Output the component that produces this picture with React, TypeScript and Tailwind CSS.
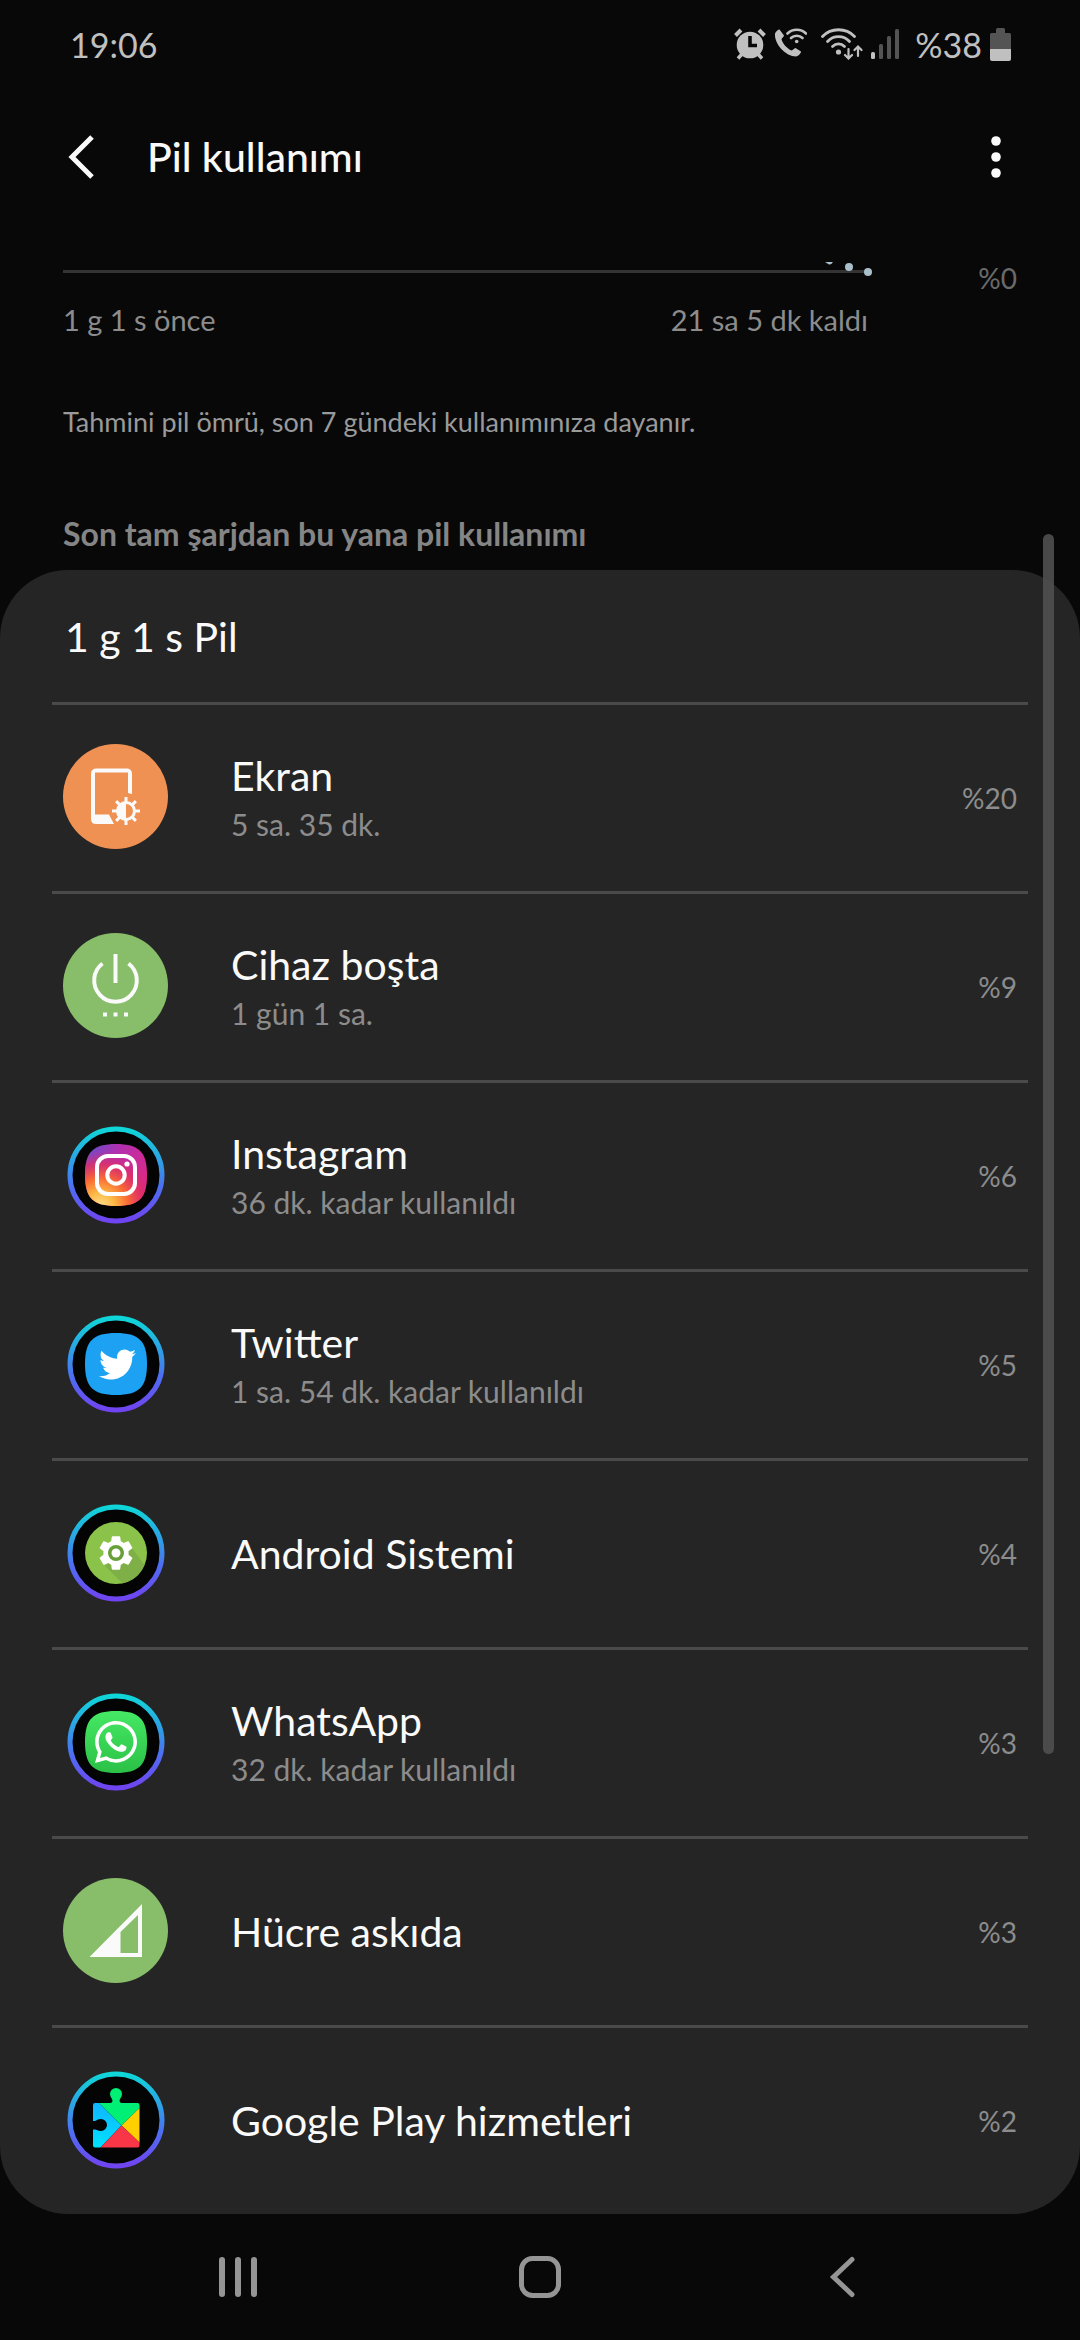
import React from "react";
import { FaTwitter, FaWhatsapp } from "react-icons/fa";
import { MdSettings } from "react-icons/md";

type UsageItem = {
  name: string;
  detail?: string;
  percent: number;
  icon: React.ReactNode;
};

const AlarmIcon = () => (
  <svg width="32" height="32" viewBox="0 0 32 32" fill="none" stroke="#c0c0c0">
    <path d="M1.5 7.5 7 2M30.500 7.500 25 2" strokeWidth="4" />
    <path d="M8 26 4 30.500M24 26l4 4.500" strokeWidth="3.500" />
    <circle cx="16" cy="17" r="13.300" fill="#c0c0c0" stroke="none" />
    <path d="M16 8v9.500h7" stroke="#080808" strokeWidth="3.600" />
  </svg>
);

const WifiCallIcon = () => (
  <svg width="33" height="32" viewBox="0 0 33 32" fill="none" stroke="#c0c0c0" strokeLinecap="round">
    <path
      d="M1 5.500C2 3.500 4 1.500 5.500 1.500L10 7.500C10 9 7.500 10 7.500 11.500C9 16 13 20.500 17.500 22.500C19 22.500 20 20 21.500 20L27 23.500C27 25.500 24.500 28 22 28.500C12 28.500 0 16 1 5.500Z"
      fill="#c0c0c0"
      stroke="none"
    />
    <path d="M13.500 5.500C18.500 .5 27 .5 32 5.500" strokeWidth="2.600" />
    <path d="M17 10C20 7 25.500 7 28.500 10" strokeWidth="2.600" />
    <circle cx="22.700" cy="13.500" r="1.800" fill="#c0c0c0" stroke="none" />
  </svg>
);

const WifiIcon = () => (
  <svg width="42" height="32" viewBox="0 0 42 32" fill="none" stroke="#c0c0c0" strokeLinecap="round">
    <path d="M1.500 8.500C10-.500 25-.500 33.500 8.500" strokeWidth="2.800" />
    <path d="M6.500 13.500C12.500 7 22.500 7 28.500 13.500" strokeWidth="2.800" />
    <path d="M11.500 18.500C15 15 20 15 23.500 18.500" strokeWidth="2.800" />
    <circle cx="17.500" cy="24" r="2.600" fill="#c0c0c0" stroke="none" />
    <path d="M27.500 21v9M24 27l3.500 3.500L31 27M37 28v-9M33.500 22l3.500-3.500L40.500 22" strokeWidth="2.200" />
  </svg>
);

const SignalIcon = () => (
  <svg width="28" height="32" viewBox="0 0 28 32" fill="#545454">
    <rect x="0" y="24" width="4" height="7" rx="1.500" fill="#c0c0c0" />
    <rect x="8" y="16" width="4" height="15" rx="1.500" />
    <rect x="16" y="8" width="4" height="23" rx="1.500" />
    <rect x="24" y="1" width="4" height="30" rx="1.500" />
  </svg>
);

const BatteryIcon = () => (
  <svg width="21" height="33" viewBox="0 0 21 33" fill="#545454">
    <path d="M6 1.500Q6 0 7.500 0H13.500Q15 0 15 1.500V5H19.500Q21 5 21 6.500V21H0V6.500Q0 5 1.500 5H6Z" />
    <path d="M0 21H21V31Q21 33 19 33H2Q0 33 0 31Z" fill="#c0c0c0" />
  </svg>
);

const ScreenIcon = () => (
  <svg width="105" height="105" viewBox="0 0 105 105">
    <circle cx="52.500" cy="52.500" r="52.500" fill="#f09154" />
    <path d="M68.500 50 65 49V28.500H32V70.500H46L51 80H33Q28 80 28 75V30Q28 24.500 33.500 24.500H63.500Q69 24.500 69 30V50Z" fill="#fafafa" />
    <g stroke="#fafafa" strokeWidth="3">
      <path d="M63 53v28M49 67h28M53.100 57.100l19.800 19.800M72.900 57.100 53.100 76.900" />
    </g>
    <circle cx="63" cy="67" r="8.500" fill="#f09154" stroke="#fafafa" strokeWidth="3" />
    <path d="M63 58a9 9 0 0 0 0 18Z" fill="#fafafa" />
  </svg>
);

const IdleIcon = () => (
  <svg width="105" height="105" viewBox="0 0 105 105">
    <circle cx="52.500" cy="52.500" r="52.500" fill="#88bd6a" />
    <g fill="none" stroke="#fafafa" strokeWidth="4">
      <path d="M52.500 21v29" />
      <path d="M39.500 30.500A21.300 21.300 0 1 0 65.500 30.500" />
    </g>
    <path d="M40 79.500h4v4h-4zM50.500 79.500h4v4h-4zM61 79.500h4v4h-4z" fill="#fafafa" />
  </svg>
);

const CellIcon = () => (
  <svg width="105" height="105" viewBox="0 0 105 105">
    <circle cx="52.500" cy="52.500" r="52.500" fill="#88bd6a" />
    <path d="M26.500 79 79 26V79ZM57.500 54V75H75V37Z" fill="#fafafa" fillRule="evenodd" />
  </svg>
);

// Black disc with the gradient ring that app icons sit in
const AppRing = ({ children }: { children: React.ReactNode }) => (
  <svg width="98" height="98" viewBox="0 0 98 98">
    <defs>
      <linearGradient id="ring" x1="0" y1="0" x2="0" y2="1">
        <stop offset="0" stopColor="#0fd6d8" />
        <stop offset=".4" stopColor="#3398e8" />
        <stop offset=".65" stopColor="#4f6cf2" />
        <stop offset="1" stopColor="#7044f0" />
      </linearGradient>
    </defs>
    <circle cx="49" cy="49" r="46" fill="#040404" stroke="url(#ring)" strokeWidth="5" />
    {children}
  </svg>
);

const squircle = "M49 18C72 18 80 26 80 49S72 80 49 80 18 72 18 49 26 18 49 18Z";

const InstagramIcon = () => (
  <AppRing>
    <defs>
      <linearGradient id="igBase" x1="0" y1="0" x2="1" y2=".5">
        <stop offset="0" stopColor="#5a55d0" />
        <stop offset=".45" stopColor="#b02fb0" />
        <stop offset="1" stopColor="#d9298a" />
      </linearGradient>
      <radialGradient id="igGlow" cx=".25" cy="1" r=".9">
        <stop offset="0" stopColor="#fee08a" />
        <stop offset=".25" stopColor="#fdb845" />
        <stop offset=".5" stopColor="#f96a35" />
        <stop offset=".75" stopColor="#e3305f" stopOpacity=".8" />
        <stop offset="1" stopColor="#d62a80" stopOpacity="0" />
      </radialGradient>
    </defs>
    <path d={squircle} fill="url(#igBase)" />
    <path d={squircle} fill="url(#igGlow)" />
    <g fill="none" stroke="#fff">
      <rect x="30" y="30" width="38" height="38" rx="11" strokeWidth="4" />
      <circle cx="49" cy="49" r="8.700" strokeWidth="4" />
    </g>
    <circle cx="60" cy="38" r="2.600" fill="#fff" />
  </AppRing>
);

const TwitterIcon = () => (
  <AppRing>
    <path d={squircle} fill="#1da1f2" />
    <FaTwitter x={32} y={31} size={37} color="#fff" />
  </AppRing>
);

const AndroidIcon = () => (
  <AppRing>
    <circle cx="49" cy="49" r="31" fill="#8bc34a" />
    <path d="M38 62 55.500 79.300A31 31 0 0 0 77.500 61L63.500 42Z" fill="#7fb048" />
    <MdSettings x={28} y={28} size={42} color="#fff" />
    <circle cx="49" cy="49" r="8" fill="#689f38" />
    <circle cx="49" cy="49" r="4.500" fill="#fff" />
  </AppRing>
);

const WhatsAppIcon = () => (
  <AppRing>
    <defs>
      <linearGradient id="wa" x1="0" y1="0" x2="0" y2="1">
        <stop offset="0" stopColor="#45e864" />
        <stop offset="1" stopColor="#2bc146" />
      </linearGradient>
    </defs>
    <path d={squircle} fill="url(#wa)" />
    <FaWhatsapp x={25} y={25} size={48} color="#fff" />
  </AppRing>
);

const PlayServicesIcon = () => (
  <AppRing>
    <defs>
      <clipPath id="puzzle">
        <path d="M28 32H43Q45.500 32 45.500 30C45.500 27.500 43 26 43 23A6 6 0 0 1 55 23C55 26 52.500 27.500 52.500 30Q52.500 32 55 32H70.500Q72.500 32 72.500 34V74.500Q72.500 76.500 70.500 76.500H28Q26 76.500 26 74.500V58.500H28C29.500 58.500 31 60 34 60A6 6 0 0 0 34 48C31 48 29.500 49.500 28 50H26V34Q26 32 28 32Z" />
      </clipPath>
      <linearGradient id="playBlue" x1="0" y1="0" x2="0" y2="1">
        <stop offset="0" stopColor="#10b4ff" />
        <stop offset="1" stopColor="#00e2ff" />
      </linearGradient>
    </defs>
    <g clipPath="url(#puzzle)">
      <path d="M26 32H32L54.500 54.500 33 77H26Z" fill="url(#playBlue)" />
      <path d="M32 32V16H73V36.500L54.500 54.500Z" fill="#00f076" />
      <path d="M73 36.500V72L54.500 54.500Z" fill="#ffcf00" />
      <path d="M73 72V77H33L54.500 54.500Z" fill="#f93648" />
    </g>
  </AppRing>
);

const items: UsageItem[] = [
  { name: "Ekran", detail: "5 sa. 35 dk.", percent: 20, icon: <ScreenIcon /> },
  { name: "Cihaz boşta", detail: "1 gün 1 sa.", percent: 9, icon: <IdleIcon /> },
  { name: "Instagram", detail: "36 dk. kadar kullanıldı", percent: 6, icon: <InstagramIcon /> },
  { name: "Twitter", detail: "1 sa. 54 dk. kadar kullanıldı", percent: 5, icon: <TwitterIcon /> },
  { name: "Android Sistemi", percent: 4, icon: <AndroidIcon /> },
  { name: "WhatsApp", detail: "32 dk. kadar kullanıldı", percent: 3, icon: <WhatsAppIcon /> },
  { name: "Hücre askıda", percent: 3, icon: <CellIcon /> },
  { name: "Google Play hizmetleri", percent: 2, icon: <PlayServicesIcon /> },
];

const StatusBar = () => (
  <div className="flex h-[88px] items-center justify-between pl-[70px] pr-[69px] text-[34px] text-[#c0c0c0]">
    <span>19:06</span>
    <div className="flex items-center">
      <AlarmIcon />
      <span className="ml-2">
        <WifiCallIcon />
      </span>
      <span className="ml-3.5">
        <WifiIcon />
      </span>
      <span className="ml-2">
        <SignalIcon />
      </span>
      <span className="ml-4">%38</span>
      <span className="ml-2">
        <BatteryIcon />
      </span>
    </div>
  </div>
);

const UsageRow = ({ item }: { item: UsageItem }) => (
  <li className="mx-[52px] border-t-[3px] border-[#4a4a4a]">
    <button type="button" className="flex h-[186px] w-full items-center pr-[11px] text-left">
      <span className="ml-[11px] flex w-[105px] shrink-0 justify-center pb-[3px]">{item.icon}</span>
      <span className="ml-[63px] flex flex-1 flex-col">
        <span className="text-[41px] leading-[52px] text-[#fafafa]">{item.name}</span>
        {item.detail && <span className="text-[30px] leading-[44px] text-[#8c8c8c]">{item.detail}</span>}
      </span>
      <span className="text-[28px] text-[#8c8c8c]">%{item.percent}</span>
    </button>
  </li>
);

const App = () => {
  return (
    <div className="relative flex min-h-screen flex-col bg-[#080808] font-['Lato','Noto_Sans',sans-serif]">
      <StatusBar />

      <header className="flex h-[138px] items-center pl-[68px] pr-[70px]">
        <button type="button" aria-label="Geri" className="pr-[51px]">
          <svg width="28" height="44" viewBox="0 0 28 44" fill="none" stroke="#fafafa" strokeWidth="5">
            <path d="M24 2 4 22 24 42" />
          </svg>
        </button>
        <h1 className="flex-1 text-[41px] font-medium text-[#fafafa]">Pil kullanımı</h1>
        <button type="button" aria-label="Diğer seçenekler">
          <svg width="28" height="44" viewBox="0 0 28 44" fill="#fafafa">
            <circle cx="14" cy="6" r="4.800" />
            <circle cx="14" cy="22" r="4.800" />
            <circle cx="14" cy="38" r="4.800" />
          </svg>
        </button>
      </header>

      <main className="flex-1 pt-9">
        {/* Bottom edge of the battery graph, scrolled under the header */}
        <section className="flex px-[63px] text-[28px] text-[#8c8c8c]">
          <div className="flex-1">
            <svg width="100%" height="14" className="overflow-visible">
              <rect y="8" width="100%" height="3" fill="#333333" />
              <svg x="100%" overflow="visible" fill="#a9c0cc">
                <path d="M-43 0H-35Q-37 3-39 2.500Z" />
                <circle cx="-19" cy="5" r="4" />
                <circle cx="0" cy="10" r="4" />
              </svg>
            </svg>
            <div className="flex justify-between pt-[22px] text-[29px] leading-[44px]">
              <span>1 g 1 s önce</span>
              <span>21 sa 5 dk kaldı</span>
            </div>
          </div>
          <span className="w-[149px] text-right leading-[32px] text-[#6a6a6a]">%0</span>
        </section>
        <p className="px-[63px] pt-14 text-[27px] leading-[48px] text-[#9a9a9a]">
          Tahmini pil ömrü, son 7 gündeki kullanımınıza dayanır.
        </p>
        <h2 className="px-[63px] pt-[66px] text-[32px] leading-[44px] font-bold text-[#858585]">
          Son tam şarjdan bu yana pil kullanımı
        </h2>

        <section className="mt-3.5 rounded-[68px] bg-[#252525]">
          <h3 className="flex h-[132px] items-center px-[65px] pt-0.5 text-[41px] text-[#fafafa]">1 g 1 s Pil</h3>
          <ul>
            {items.map((item) => (
              <UsageRow key={item.name} item={item} />
            ))}
          </ul>
        </section>
      </main>

      <nav className="grid h-[126px] grid-cols-3 px-[87px]">
        <button type="button" aria-label="Son uygulamalar" className="flex items-center justify-center">
          <svg width="40" height="42" viewBox="0 0 40 42" fill="#959595">
            <rect x="1" y="1" width="6" height="40" rx="3" />
            <rect x="17" y="1" width="6" height="40" rx="3" />
            <rect x="33" y="1" width="6" height="40" rx="3" />
          </svg>
        </button>
        <button type="button" aria-label="Ana ekran" className="flex items-center justify-center">
          <svg width="42" height="42" viewBox="0 0 42 42" fill="none" stroke="#959595" strokeWidth="5">
            <rect x="2.500" y="2.500" width="37" height="37" rx="11" />
          </svg>
        </button>
        <button type="button" aria-label="Geri git" className="flex items-center justify-center">
          <svg width="26" height="42" viewBox="0 0 26 42" fill="none" stroke="#959595" strokeWidth="5" strokeLinecap="round">
            <path d="M23 3.500 4.500 21 23 38.500" />
          </svg>
        </button>
      </nav>

      <div className="absolute top-[534px] right-[26px] h-[1220px] w-[11px] rounded-full bg-[#505050]/90" />
    </div>
  );
};

export default App;
